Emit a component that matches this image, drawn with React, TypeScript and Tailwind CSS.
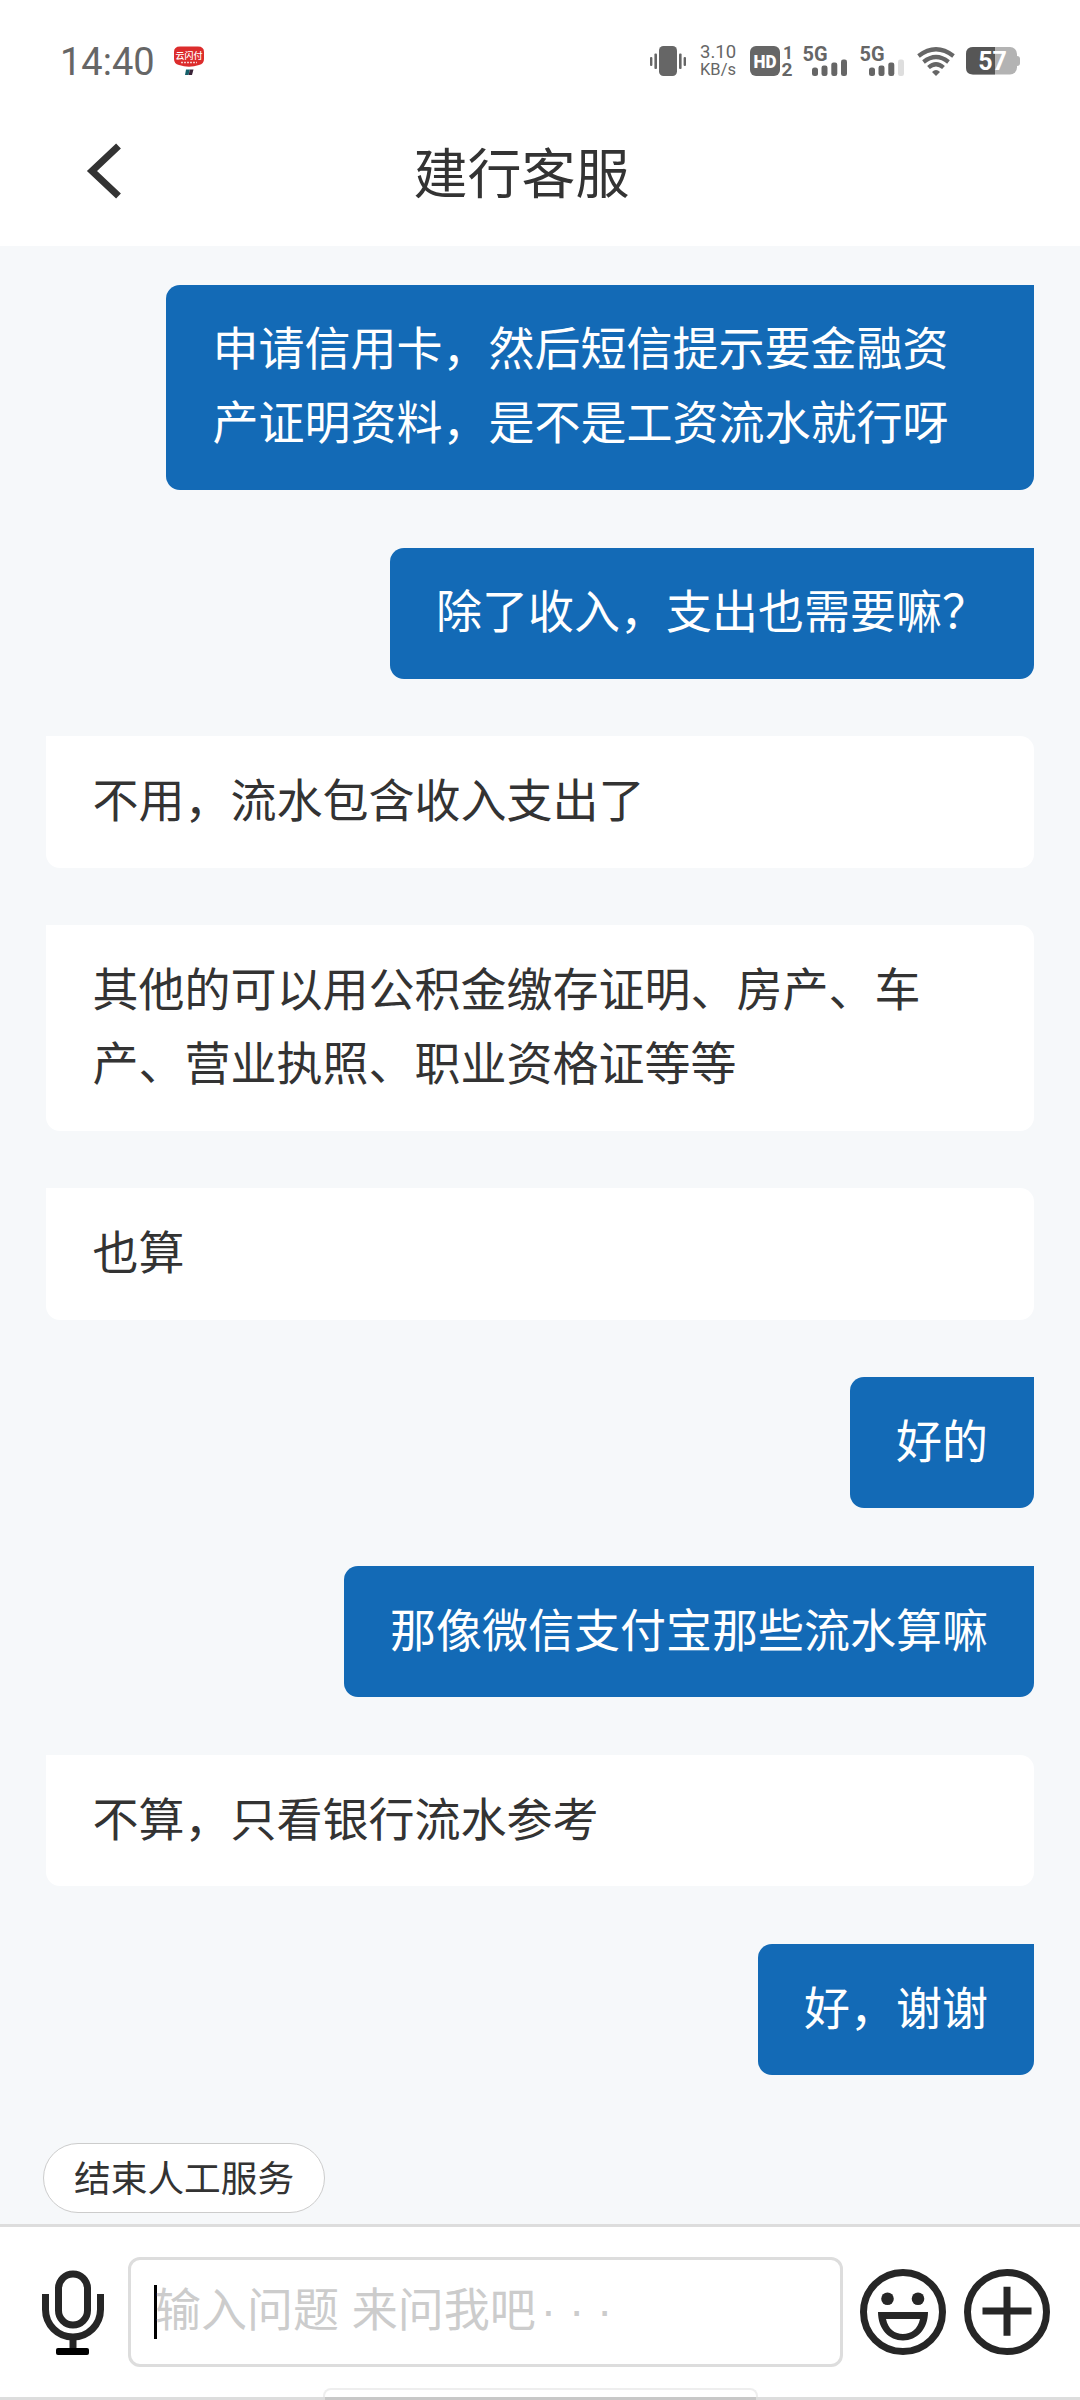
import clsx from 'clsx'

type Message = {
  id: number
  from: 'user' | 'agent'
  text: string
}

const messages: Message[] = [
  { id: 1, from: 'user', text: '申请信用卡，然后短信提示要金融资产证明资料，是不是工资流水就行呀' },
  { id: 2, from: 'user', text: '除了收入，支出也需要嘛？' },
  { id: 3, from: 'agent', text: '不用，流水包含收入支出了' },
  { id: 4, from: 'agent', text: '其他的可以用公积金缴存证明、房产、车产、营业执照、职业资格证等等' },
  { id: 5, from: 'agent', text: '也算' },
  { id: 6, from: 'user', text: '好的' },
  { id: 7, from: 'user', text: '那像微信支付宝那些流水算嘛' },
  { id: 8, from: 'agent', text: '不算，只看银行流水参考' },
  { id: 9, from: 'user', text: '好，谢谢' },
]

function PayBadge() {
  return (
    <svg className="ml-[19px]" width="30" height="30" viewBox="0 0 30 30" aria-hidden>
      <path d="M6 0.500H24Q30 0.500 30 6V13Q30 18 25 19Q15 22.500 5 19Q0 18 0 13V6Q0 0.500 6 0.500Z" fill="#dc2c2c" />
      <text x="15" y="13" textAnchor="middle" fontSize="9" fontWeight="500" fill="#fff" fontFamily="'Noto Sans CJK SC', sans-serif">
        云闪付
      </text>
      <path d="M7 16.500H23" stroke="#fff" strokeWidth="1.600" strokeDasharray="2 1" opacity="0.75" />
      <path d="M12 23.500H16L14.500 29H11Z" fill="#14606a" />
      <path d="M16 23.500H19.500L18 29H14.500Z" fill="#3a2338" />
    </svg>
  )
}

function VibrateIcon() {
  return (
    <svg width="36" height="30" viewBox="0 0 36 30" fill="#666" aria-hidden>
      <rect x="9" width="18" height="30" rx="4.500" />
      <rect x="0" y="11" width="2.400" height="9" rx="1" />
      <rect x="4.400" y="7.500" width="2.600" height="15.500" rx="1" />
      <rect x="29" y="7.500" width="2.600" height="15.500" rx="1" />
      <rect x="33.600" y="11" width="2.400" height="9" rx="1" />
    </svg>
  )
}

function HdIcon() {
  return (
    <svg className="ml-[14px] overflow-visible" width="43" height="30" viewBox="0 0 43 30" fontFamily="Roboto, sans-serif" fontWeight="700" aria-hidden>
      <rect width="30" height="30" rx="6" fill="#666" />
      <text x="3.500" y="21.500" fontSize="19" textLength="23" lengthAdjust="spacingAndGlyphs" fontWeight="900" fill="#fff">
        HD
      </text>
      <text x="33" y="12.500" fontSize="17.500" fill="#666">1</text>
      <text x="31.500" y="30" fontSize="18" textLength="11" lengthAdjust="spacingAndGlyphs" fill="#666">2</text>
    </svg>
  )
}

function SignalIcon({ weak }: { weak?: boolean }) {
  return (
    <svg className="overflow-visible" width="46" height="30" viewBox="0 0 46 30" fill="#666" aria-hidden>
      <text x="-0.500" y="14.500" fontSize="20" fontWeight="700" fontFamily="Roboto, sans-serif" textLength="25" lengthAdjust="spacingAndGlyphs">
        5G
      </text>
      <rect x="9" y="21.500" width="6" height="8.500" rx="2.500" />
      <rect x="18.500" y="19.500" width="6" height="10.500" rx="2.200" />
      <rect x="28.300" y="16.500" width="6" height="13.500" rx="2.200" />
      <rect x="38" y="13.500" width="6" height="16.500" rx="2.200" fill={weak ? '#dedede' : '#666'} />
    </svg>
  )
}

function WifiIcon() {
  return (
    <svg className="ml-[11px]" width="38" height="30" viewBox="0 0 38 30" fill="none" stroke="#666" strokeWidth="4.200" aria-hidden>
      <path d="M1.500 10Q19 -3.500 36.500 10" />
      <path d="M6.500 16Q19 6 31.500 16" />
      <path d="M11.500 21.500Q19 15 26.500 21.500" />
      <path d="M15 26Q19 22 23 26L19 30Z" fill="#666" stroke="none" />
    </svg>
  )
}

function BatteryIcon({ level }: { level: number }) {
  return (
    <svg className="ml-[11px]" width="54" height="28" viewBox="0 0 54 28" aria-hidden>
      <rect x="45" y="9" width="9" height="10" rx="3" fill="#b3b3b3" />
      <rect width="51" height="27.500" rx="7" fill="#b3b3b3" />
      <path d="M7 0H29V27.500H7Q0 27.500 0 20.500V7Q0 0 7 0Z" fill="#565656" />
      <text x="26.500" y="22.500" textAnchor="middle" fontSize="25" fontWeight="700" fontFamily="Roboto, sans-serif" fill="#fff">
        {level}
      </text>
    </svg>
  )
}

function StatusBar() {
  return (
    <div className="flex h-[122px] items-center pl-[60px] pr-[60px] font-['Roboto',sans-serif] text-[#666]">
      <span className="pt-[2px] text-[38px] leading-none">14:40</span>
      <PayBadge />
      <div className="ml-auto flex items-center">
        <VibrateIcon />
        <div className="ml-[14px] w-[36px] whitespace-nowrap text-[18.500px] leading-[18px]">
          <div>3.10</div>
          <div className="text-[16.500px]">KB/s</div>
        </div>
        <HdIcon />
        <div className="ml-[10px] flex gap-[11px]">
          <SignalIcon />
          <SignalIcon weak />
        </div>
        <WifiIcon />
        <BatteryIcon level={57} />
      </div>
    </div>
  )
}

function Bubble({ message }: { message: Message }) {
  const mine = message.from === 'user'
  return (
    <div
      className={clsx(
        'pb-[33.500px] pl-[46.500px] pr-[46px] pt-[23.800px] text-[46px] leading-[74px]',
        mine
          ? 'max-w-[868px] self-end rounded-[14px] rounded-tr-none bg-[#136ab6] text-white'
          : 'rounded-[14px] rounded-tl-none bg-white text-[#333]',
      )}
    >
      {message.text}
    </div>
  )
}

function MicIcon() {
  return (
    <svg width="62" height="86" viewBox="0 0 62 86" fill="none" stroke="#262626" strokeWidth="7" aria-hidden>
      <rect x="16.500" y="4" width="29" height="51" rx="14.500" />
      <path d="M3.500 24V39.500A27.500 27.500 0 0 0 58.500 39.500V24" />
      <path d="M31 68V80" />
      <rect x="14" y="78" width="33" height="7" rx="2" fill="#000" stroke="none" />
    </svg>
  )
}

function SmileIcon() {
  return (
    <svg width="86" height="86" viewBox="0 0 86 86" fill="#262626" aria-hidden>
      <circle cx="43" cy="43" r="39.500" fill="none" stroke="#262626" strokeWidth="7" />
      <circle cx="27.500" cy="29.700" r="6.300" />
      <circle cx="58" cy="29.700" r="6.300" />
      <path fillRule="evenodd" d="M18 43H68C68 60 57 71.500 43 71.500S18 60 18 43ZM26 50C28 60 35 65 43 65S58 60 60 50Z" />
    </svg>
  )
}

function PlusIcon() {
  return (
    <svg width="86" height="86" viewBox="0 0 86 86" fill="none" stroke="#262626" strokeWidth="7" aria-hidden>
      <circle cx="43" cy="43" r="39.500" />
      <path d="M18.500 42H67.500M43 17.700V66.700" />
    </svg>
  )
}

export default function App() {
  return (
    <div className="flex h-[2400px] w-[1080px] flex-col overflow-hidden bg-[#f6f8fa] font-['Noto_Sans_CJK_SC',sans-serif]">
      <header className="h-[246px] bg-white">
        <StatusBar />
        <div className="flex h-[98px] items-center pl-[86px]">
          <svg width="38" height="56" viewBox="0 0 38 56" fill="none" aria-hidden>
            <path d="M32.500 3L6 28L32.500 53" stroke="#333" strokeWidth="7" />
          </svg>
          <h1 className="ml-[289.500px] text-[54px] leading-none text-[#333]">建行客服</h1>
        </div>
      </header>

      <main className="flex flex-1 flex-col gap-[57.600px] px-[46px] pt-[38.700px]">
        {messages.map((m) => (
          <Bubble key={m.id} message={m} />
        ))}
      </main>

      <div className="flex h-[81px] px-[43px]">
        <button className="h-[70px] rounded-full border border-[#ccc] bg-white px-[30px] pb-[4px] text-[36.700px] leading-[63px] text-[#333]">
          结束人工服务
        </button>
      </div>

      <footer className="flex h-[176px] flex-col border-t-[3px] border-[#ddd] bg-white">
        <div className="flex items-start pl-[42px] pt-[30px]">
          <div className="mt-[13px]">
            <MicIcon />
          </div>
          <div className="ml-[24px] flex h-[110px] w-[715px] items-center rounded-[12px] border-[3px] border-[#ddd] pl-[23px] text-[46px] text-[#ccc]">
            <span className="h-[54px] w-[3px] bg-black" />
            <span className="-ml-[2px] whitespace-pre pb-[3px] font-['Liberation_Sans','Noto_Sans_CJK_SC',sans-serif]">
              输入问题 来问我吧<span className="ml-[5px]">· · ·</span>
            </span>
          </div>
          <div className="ml-[17px] mt-[12px] flex gap-[18px]">
            <SmileIcon />
            <PlusIcon />
          </div>
        </div>
        <div className="ml-[323px] mt-auto h-[9px] w-[435px] shrink-0 rounded-t-[8px] border-2 border-b-0 border-[#eee]" />
        <div className="h-[3px] shrink-0 bg-[#ddd] pl-[325px]">
          <div className="h-[3px] w-[431px] bg-[#c8c8c8]" />
        </div>
      </footer>
    </div>
  )
}
